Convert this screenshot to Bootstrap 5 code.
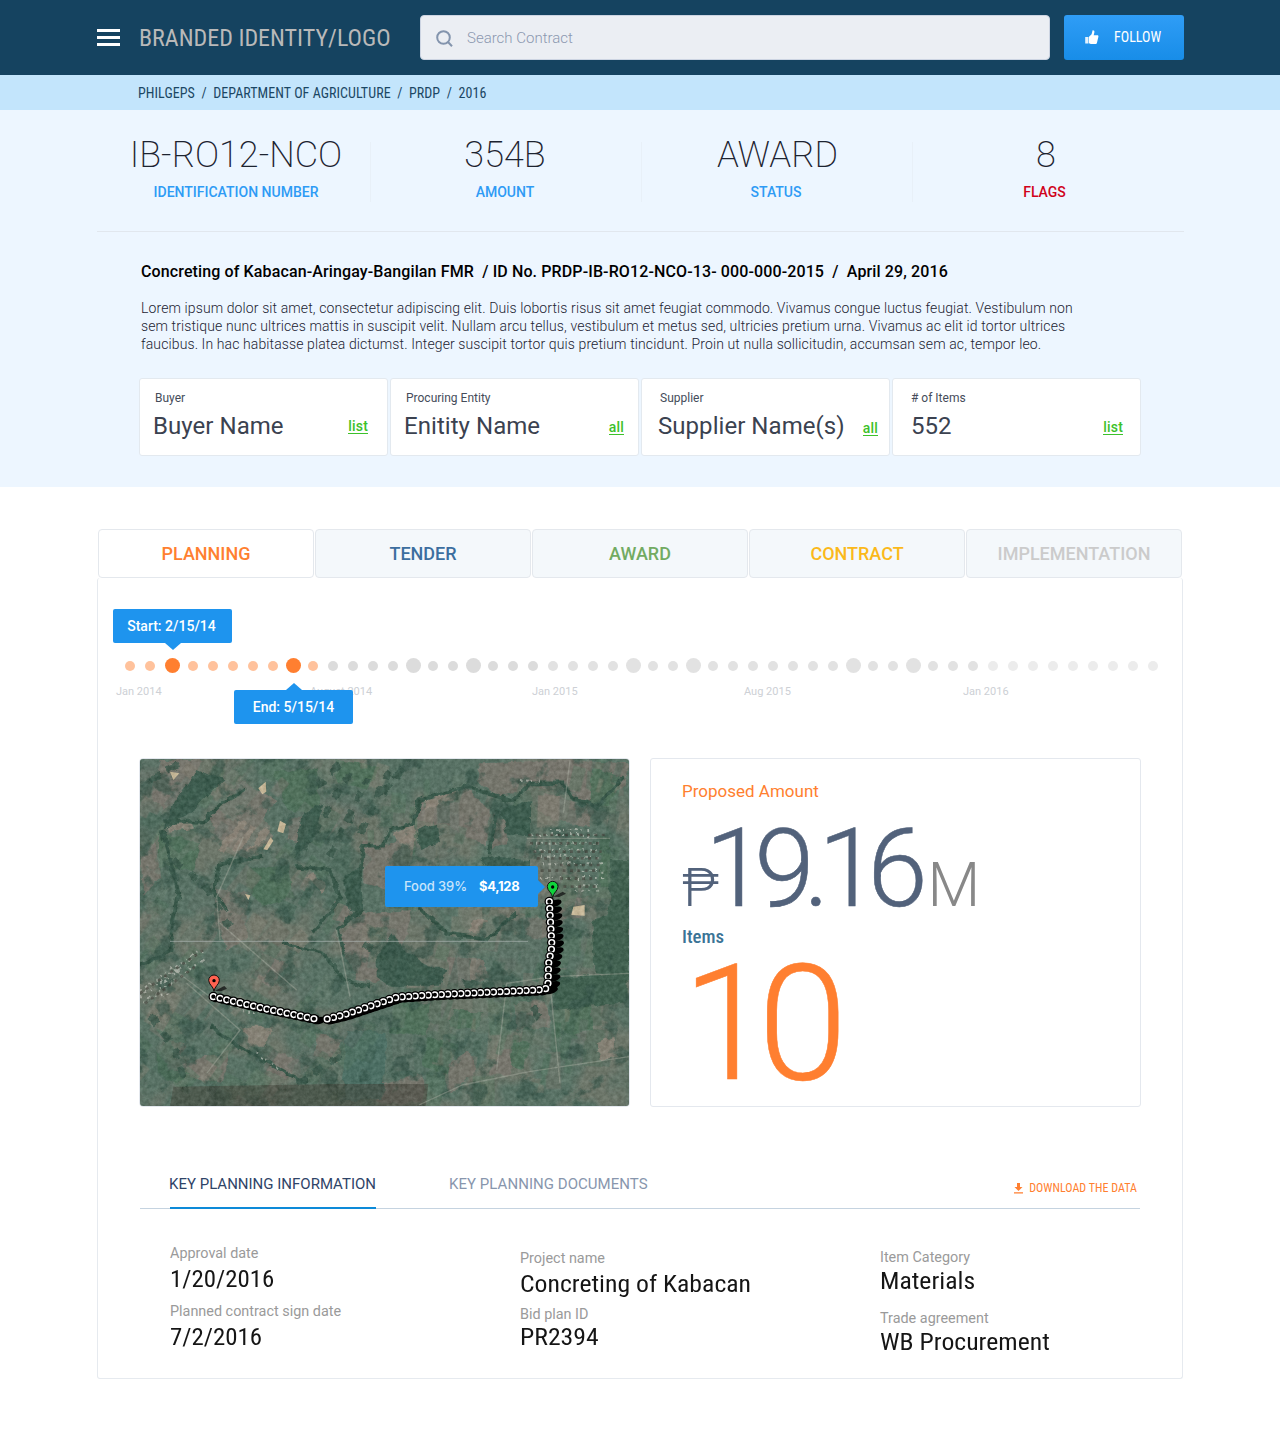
<!DOCTYPE html>
<html lang="en">
<head>
<meta charset="utf-8">
<meta name="viewport" content="width=device-width, initial-scale=1">
<title>Contract</title>
<link href="https://cdn.jsdelivr.net/npm/bootstrap@5.3.0/dist/css/bootstrap.min.css" rel="stylesheet">
<style>
body{font-family:Roboto,"Liberation Sans",sans-serif;background:#fff;color:#2f3644}
.shell{width:1086px;margin:0 auto}
.rc{font-stretch:75%}
.topbar{background:#154360;height:75px}
.topbar .shell>*{flex:none}
.burger{width:23px;height:17px}
.burger span{height:3px;background:#fff}
.brand{font-size:24px;line-height:30px;color:#b9b9b9;margin-left:19px;width:281px;white-space:nowrap;padding-top:1px}
.searchbox{width:630px;height:45px;background:#ebeef3;border:1px solid #ccd4e2;border-radius:4px;color:#8b98b0;font-size:15px;font-weight:300;padding:1px 0 0 15px;gap:14px}
.follow{width:120px;height:45px;border:0;border-radius:3px;background:linear-gradient(#2f9df6,#188de8);color:#fff;font-size:14px;padding:0 0 0 21px;margin-left:14px;gap:15px}
.crumbs{background:#c3e5fc;height:35px;color:#1b4764;font-size:14px;letter-spacing:.06px;white-space:pre}
.crumbs span{padding:2px 0 0 41px}
.hero{background:#edf6ff;height:377px}
.stats{height:122px;border-bottom:1px solid #e1e7ee;padding-top:22px;width:1087px}
.stat{width:271px;text-align:center}
.stat:first-child{width:273px;padding-left:5px}
.stat+.stat{border-left:1px solid #e8f0f8;height:60px;margin-top:10px;padding-right:2px}
.stat+.stat .big{margin-top:-10px}
.stat:nth-child(3) .big,.stat:last-child .big{padding-left:3px}
.stat:last-child{padding-right:7px}
.big{font-size:36px;line-height:46px;font-weight:200;color:#1c2330}
.lbl{font-size:14px;line-height:20px;font-weight:500;color:#2e9bf5;margin-top:4px}
.lbl.red{color:#d0021b}
.ttl{font-size:16px;line-height:20px;font-weight:500;color:#000;margin:0 0 0 44px;padding-top:30px;letter-spacing:.12px;white-space:pre}
.desc{font-size:14px;line-height:18px;color:#1c2332;font-weight:300;letter-spacing:.11px;margin:17px 0 0 44px;white-space:nowrap}
.tiles{margin:25px 0 0 42px;gap:2px}
.tile{width:249px;height:78px;background:#fff;border:1px solid #e3e9ef;border-radius:3px;padding:10px 19px 0 13px}
.tile .cap{font-size:12px;line-height:18px;padding-left:2px;color:#454c5a}
.tile .val{font-size:24px;line-height:38px;font-weight:400;color:#3b4250;letter-spacing:.05px}
.tile a{font-size:14px;line-height:14px;font-weight:500;color:#3cc12b;text-decoration:none;border-bottom:1px solid #3cc12b;letter-spacing:.2px}
.tile .dn1{margin-top:2px}
.tile .dn2{margin-top:4px}
.phases{padding:42px 1px 0;gap:1px}
.phases div{flex:1;height:49px;border:1px solid #e4e8ed;border-radius:4px;background:#f4f8fb;font-size:18px;font-weight:500;text-align:center;line-height:48px}
.phases .on{background:#fff}
.panel{height:801px;border:1px solid #e6eaef;border-top:0;border-radius:3px}
.timeline{height:180px;position:relative}
.dots{padding:77px 0 0 22px}
.dots i{width:20px;height:20px;display:flex;align-items:center;justify-content:center;flex:none}
.dots i:nth-child(2){margin-right:2px}
.dots i:nth-child(3){margin-right:1px}
.dots i::before{content:"";width:10px;height:10px;border-radius:50%;background:#e2e2e2;margin-top:1px}
.dots .o::before{background:#ffc29c}
.dots .g::before{background:#dcdcdc}
.dots .l::before{background:#ececec}
.dots .xl::before{width:15px;height:15px}
.dots .hot::before{background:#ff7f30}
.axis{font-size:11px;line-height:16px;color:#cdd0d5;margin-top:9px;padding-left:18px}
.axis span{flex:none}
.tip{position:absolute;background:#1e94ee;border-radius:2px;color:#fff;font-size:14px;font-weight:500;text-align:center;height:34px;line-height:34px;width:119px}
.tip::after{content:"";position:absolute;left:52px;border:8px solid transparent}
.tip.up{left:15px;top:31px;padding-right:2px}
.tip.dn{left:136px;top:112px}
.tip.up::after{bottom:-7px;border-bottom:0;border-top:7px solid #1e94ee}
.tip.dn::after{top:-7px;border-top:0;border-bottom:7px solid #1e94ee}
.mapbox{width:491px;height:349px;border:1px solid #e4e8ee;border-radius:4px;overflow:hidden;position:relative;flex:none}
.mapbox svg{display:block}
.maptip{position:absolute;left:245px;top:107px;width:153px;height:41px;border-radius:2px;background:#1e94ee;color:#fff;font:500 13px/41px Inter,sans-serif;padding-left:19px;white-space:nowrap}
.maptip .who{color:#c9e4fb;margin-right:12px;letter-spacing:-.08px}
.maptip .sum{font-weight:700;letter-spacing:-.32px}
.maptip::after{content:"";position:absolute;right:-7px;top:14px;border:7px solid transparent;border-right:0;border-left-color:#1e94ee}
.amt{width:491px;height:349px;border:1px solid #e4e8ee;border-radius:3px;margin-left:20px;padding:21px 0 0 31px}
.amt .cap{font-size:17px;line-height:22px;color:#ff7f30;font-weight:400}
.amt .money{font-weight:300;color:#52627b;height:110px;line-height:110px;margin-top:12px;white-space:nowrap}
.money .cur{font-size:54px;letter-spacing:-6px}
.money .num{font-size:109px;letter-spacing:-11.3px;margin-left:-8px;-webkit-text-stroke:.5px #52627b}
.money .mil{font-size:61px;color:#888;margin-left:11px}
.amt .itm{font-size:18.8px;line-height:22px;font-weight:500;color:#3a7396;margin-top:2px}
.amt .ten{font-size:162px;line-height:152px;font-weight:300;color:#ff7f30;letter-spacing:-14px;-webkit-text-stroke:.5px #ff7f30}
.subtabs{margin:57px 42px 0;height:45px;border-bottom:1px solid #c5d3e0;padding-left:30px}
.subtabs .st{font-size:15px;line-height:20px;color:#8896ad;height:45px;padding-top:10px;white-space:nowrap}
.subtabs .on{color:#2f4468;width:206px;border-bottom:2px solid #0d8ad8}
.subtabs .on span{margin-left:-1px}
.subtabs .off{margin-left:73px;letter-spacing:.04px}
.dl{font-size:12px;color:#ff7f30;line-height:14px;gap:6px;margin-right:3px;padding-top:17px;letter-spacing:.03px}
.info{padding-left:72px}
.info dl{margin:0}
.info dt{font-size:14.4px;line-height:20px;font-weight:400;color:#9a9a9a}
.info dd{font-size:24.5px;line-height:30px;font-stretch:75%;color:#151515;margin:0;white-space:nowrap;transform:scaleX(1.05);transform-origin:0 0}
.c1{width:350px;padding-top:35px}.c2{width:360px;padding-top:40px}.c3{padding-top:39px}
.info .c1 dd{height:38px;transform:scaleX(1.015)}.c2 dd{height:36px}.c3 dd{height:43px}
.info .c3 dd{margin-top:-2px}
.info .c2 dd:last-child{margin-top:-3px}
</style>
</head>
<body>
<header class="topbar">
  <div class="shell d-flex align-items-center h-100">
    <div class="burger d-flex flex-column justify-content-between"><span></span><span></span><span></span></div>
    <div class="brand rc">BRANDED IDENTITY/LOGO</div>
    <div class="searchbox d-flex align-items-center">
      <svg width="17" height="17" viewBox="0 0 17 17" fill="none" stroke="#8394ad" stroke-width="2"><circle cx="7.5" cy="7.5" r="6.3"/><path d="M12 12l4 4.2"/></svg>
      <span>Search Contract</span>
    </div>
    <button class="btn follow rc d-flex align-items-center" type="button">
      <svg width="14" height="15" viewBox="0 0 14 15" fill="#fff"><path d="M.2 7h3.300v6.500H.2z" opacity=".88"/><path d="M4 13.300V6.800L6.600 4.300 7.600.3c1.400-.2 2 .8 1.800 2L8.700 5.200H12.300c1 0 1.300.7 1.100 1.500l-1.500 6.200c-.2.800-.7 1.100-1.400 1.100H5.800z"/></svg>
      <span>FOLLOW</span>
    </button>
  </div>
</header>
<nav class="crumbs"><div class="shell d-flex align-items-center h-100"><span class="rc">PHILGEPS  /  DEPARTMENT OF AGRICULTURE  /  PRDP  /  2016</span></div></nav>
<section class="hero">
  <div class="shell">
    <div class="stats d-flex">
      <div class="stat"><div class="big">IB-RO12-NCO</div><div class="lbl">IDENTIFICATION NUMBER</div></div>
      <div class="stat"><div class="big">354B</div><div class="lbl">AMOUNT</div></div>
      <div class="stat"><div class="big">AWARD</div><div class="lbl">STATUS</div></div>
      <div class="stat"><div class="big">8</div><div class="lbl red">FLAGS</div></div>
    </div>
    <h1 class="ttl">Concreting of Kabacan-Aringay-Bangilan FMR  / ID No. PRDP-IB-RO12-NCO-13- 000-000-2015  /  April 29, 2016</h1>
    <p class="desc">Lorem ipsum dolor sit amet, consectetur adipiscing elit. Duis lobortis risus sit amet feugiat commodo. Vivamus congue luctus feugiat. Vestibulum non<br>sem tristique nunc ultrices mattis in suscipit velit. Nullam arcu tellus, vestibulum et metus sed, ultricies pretium urna. Vivamus ac elit id tortor ultrices<br>faucibus. In hac habitasse platea dictumst. Integer suscipit tortor quis pretium tincidunt. Proin ut nulla sollicitudin, accumsan sem ac, tempor leo.</p>
    <div class="tiles d-flex">
      <div class="tile"><div class="cap">Buyer</div><div class="d-flex justify-content-between align-items-center"><span class="val">Buyer Name</span><a href="#">list</a></div></div>
      <div class="tile" style="padding-right:14px"><div class="cap">Procuring Entity</div><div class="d-flex justify-content-between align-items-center"><span class="val">Enitity Name</span><a href="#" class="dn1">all</a></div></div>
      <div class="tile" style="padding-right:11px;padding-left:16px"><div class="cap">Supplier</div><div class="d-flex justify-content-between align-items-center"><span class="val">Supplier Name(s)</span><a href="#" class="dn2">all</a></div></div>
      <div class="tile" style="padding-right:17px;padding-left:18px"><div class="cap" style="padding-left:0">&#35; of Items</div><div class="d-flex justify-content-between align-items-center"><span class="val">552</span><a href="#" class="dn1">list</a></div></div>
    </div>
  </div>
</section>
<main class="shell">
  <div class="phases d-flex">
    <div class="on" style="color:#ff7f30">PLANNING</div>
    <div style="color:#3c6e9f">TENDER</div>
    <div style="color:#72ab62">AWARD</div>
    <div style="color:#fbb91a">CONTRACT</div>
    <div style="color:#cbcbcb">IMPLEMENTATION</div>
  </div>
  <div class="panel">
    <div class="timeline">
      <div class="dots d-flex" id="dots"></div>
      <div class="axis d-flex"><span style="width:194px">Jan 2014</span><span style="width:222px">August 2014</span><span style="width:212px">Jan 2015</span><span style="width:219px">Aug 2015</span><span>Jan 2016</span></div>
      <div class="tip up">Start: 2/15/14</div>
      <div class="tip dn">End: 5/15/14</div>
    </div>
    <div class="d-flex" style="padding-left:41px">
      <div class="mapbox">
        <svg width="489" height="347" viewBox="30 27 1467 1041" preserveAspectRatio="none" color-interpolation-filters="sRGB">
          <defs>
            <filter id="rough" x="-5%" y="-5%" width="110%" height="110%"><feTurbulence type="fractalNoise" baseFrequency=".03" numOctaves="3" seed="4"/><feDisplacementMap in="SourceGraphic" scale="22" xChannelSelector="R" yChannelSelector="G"/></filter>
            <filter id="veg" x="0" y="0" width="100%" height="100%"><feTurbulence type="fractalNoise" baseFrequency=".014" numOctaves="5" seed="11"/><feColorMatrix values="0 0 0 0 .17  0 0 0 0 .3  0 0 0 0 .25  9 0 0 0 -5.2"/></filter>
            <filter id="soil" x="0" y="0" width="100%" height="100%"><feTurbulence type="fractalNoise" baseFrequency=".006" numOctaves="3" seed="23"/><feColorMatrix values="0 0 0 0 .47  0 0 0 0 .46  0 0 0 0 .41  0 5 0 0 -2.200"/></filter>
            <filter id="grain" x="0" y="0" width="100%" height="100%"><feTurbulence type="fractalNoise" baseFrequency=".08" numOctaves="3" seed="8"/><feColorMatrix values="1.300 0 0 0 -.1  1.300 0 0 0 -.08  1.300 0 0 0 -.1  0 0 0 0 .13"/></filter>
          </defs>
          <rect x="30" y="27" width="1467" height="1041" fill="#526e60"/>
          <rect x="30" y="27" width="1467" height="1041" filter="url(#soil)" opacity=".6"/>
          <g filter="url(#rough)">
            <g fill="#76736a" opacity=".9">
              <path d="M90 30h130l-50 90-70 60-40-50zM240 200l90-110 110 60-40 60 30 50-80 70-90-70zM860 160l140-50 80 70-10 110-110-60-110-30zM1050 40l250-10-10 70-190 40-60-50zM1200 110l190 70-10 50-70-10-100-40zM1090 190l50 40-10 60h-50zM1280 30l217 10-17 70-100 60-80-50zM30 300l50-20 10 100-50 60zM480 200l70 10-30 70-50-10zM930 960l90-60 20 60-80 70z"/>
              <path d="M700 270l70 20 90-60-10 100-70 90-80-20zM700 490l150-10-50 160-60 60-60-10-50-130zM610 450l60 20-20 50-40-10zM1310 450l70-10-30 60-70 10zM120 870l50 20-30 40zM160 940l140-40-20 100-100-20zM1150 760l100-10 10 80-100 10zM260 420l90 10v130l-60 40-40-110zM400 610l80 30-60 70-50-30zM1110 900l60-10-30 90-60-10z"/>
              <path d="M560 850l80 20-20 70-70-20zM760 1000l120-30 10 90H740zM1180 500l110 10-30 60-70-10zM950 620l110 10 20 60-120 10zM430 900l80 30-50 60-60-40z"/>
            </g>
            <g fill="#456b52" opacity=".85"><path d="M350 360l130-20 10 100-90 30-50-50zM430 60h130l10 140-100-20zM790 760h110l-10 90H780zM1270 780l110-10 10 70-110 20zM970 780l90 10-20 50-80-10zM90 250l120 30-20 80-100-10zM1390 50l80 30-30 90-60-10zM890 860l90 20-30 90-70-20zM1150 870l50 10-20 80-40-10zM80 900l40 60 60 10-40 30-60-30zM1410 260h30v150h-30zM620 30l130 20-40 70-90-20z"/></g>
            <path fill="#446a5f" d="M650 840l120 10-10 200H640z"/>
          </g>
          <g id="plots" opacity=".42"></g>
          <g filter="url(#rough)">
            <g fill="#8c8376" opacity=".85"><path d="M1030 510h40l-20 35h-40zM330 830h100l-30 60h-30zM790 250l60-30 10 50-50 20zM530 380l20-10 40 40-10 20zM330 210l20 8-70 95-16-12zM360 225l22 8-60 80-18-10zM400 235l20 10-50 70-16-12zM890 140l90-20-10 30-90 30zM1400 880l50-20 10 60-50 10zM110 222l70-6 10 20-80 12z"/></g>
            <g fill="#2f5244" opacity=".9"><path d="M740 620l50-70 30 50 80 50 50 0-20 60H780l-40-30zM1110 180l90-30v110l-70-10zM1050 320l150 10v50l-120-20zM200 60l80 30-90 90-90 60 30-80zM860 240l60-20 10 60-60 20zM520 190l60-30-30 110-60 50zM640 380l50-30 10 130-40 10z"/></g>
            <path fill="#375a48" d="M1440 330h57v350l-100-10-10-150 50-30zM1270 680l220-10v90l-220 20z"/>
            <path fill="none" stroke="#2e5041" stroke-width="11" d="M1200 100l-50 50-150-40-130 40-20 70-70 20-20 50h-60l-10 90-40 50 40 50-70 60 30 80M95 240l50 180-20 100 0 80-100 50M100 215h120l60-60 70-40M400 320l-130 20-20 80 40 60M500 350l100 10 30 80-80 110M1200 100h100l30 50 70 20 80-90M870 470l80 80 120 20 90-80M460 580l120 30 60 80 80 20M1100 180l-20 130M240 830l120 80 170 90"/>
            <g fill="none" stroke="#2d4e40" stroke-width="20" stroke-dasharray="34 26" opacity=".8"><path d="M560 110l90-80M520 300l140-230M600 320l110-230M690 250l90-190M760 130l80-100M130 330l90 70 80 130M60 90l90-50M60 800l80 100 30 130M700 580l90 50M500 1000l140-90M1000 700l180 20 50 90"/></g>
          </g>
          <rect x="30" y="27" width="1467" height="1041" filter="url(#veg)" opacity=".6"/>
          <path fill="#3a3d31" opacity=".55" d="M130 1010l480-8 285 0-8 66H120z"/>
          <g fill="none" stroke="#a9aca0" stroke-width="4" opacity=".45"><path d="M230 970l100-130-160-140M270 570l-10-130 80-180M270 520l230 200M1497 920l-300 45-200 40-130 60M1100 960l30-260 140-20 230-10M1320 30l-20 160M1260 270v130M1190 265h250M1290 1000l-30-300M120 650l120 90M620 540l40 200"/></g>
          <g fill="#cdbb98"><path d="M450 212l18 10-8 28-18-6zM385 115l22-20 2 30-12 8zM400 298l22-36 8 10-18 28zM120 65l28 5-18 20zM1330 470l34-5v32l-40-2zM345 432l16 4-6 14z"/></g>
          <g fill="none" stroke="#d5d5cc" stroke-width="6" stroke-dasharray="5 13 8 9 4 17" opacity=".6" filter="url(#rough)"><path d="M1205 255h200M1200 278h220M1210 300h190M1230 320h180M1240 340h180M1340 362h80M1230 384h190M1340 406h70M1260 240h130M1340 422h60M30 740l190-135M30 722l180-120M60 745l160-115M90 715l60-65M40 755l80-30M300 770l90 20M380 910l70 50M1170 90l60 5"/></g>
          <g fill="none" stroke="#3c3a33" stroke-width="8" stroke-dasharray="9 13" opacity=".65"><path d="M1195 255h240M1200 280h220M1210 305h205M1220 325h190M1290 345h120M1210 362h200M1290 386h110M1300 410h100M30 730l190-130M45 760l150-110"/></g>
          <rect x="30" y="27" width="1467" height="1041" filter="url(#grain)"/>
          <path stroke="#b5bdbc" stroke-width="3" opacity=".6" d="M120 574h1074"/>
          <g id="route"></g>
          <path fill="#111" opacity=".75" d="M255 722l28-14 8 8-18 8zM1270 440l28-15 10 6-20 10z"/>
          <g stroke="#111" stroke-width="3"><path fill="#ff6250" d="M252 724c-2-16-16-20-16-33a16 16 0 0132 0c0 13-14 17-16 33z"/><path fill="#0fd43c" d="M1268 443c-2-16-16-20-16-33a16 16 0 0132 0c0 13-14 17-16 33z"/></g>
          <circle cx="252" cy="692" r="5"/><circle cx="1268" cy="411" r="5"/>
        </svg>
        <div class="maptip"><span class="who">Food 39%</span><span class="sum">$4,128</span></div>
      </div>
      <div class="amt">
        <div class="cap">Proposed Amount</div>
        <div class="money"><span class="cur">₱</span><span class="num">19.16</span><span class="mil">M</span></div>
        <div class="itm rc">Items</div>
        <div class="ten">10</div>
      </div>
    </div>
    <div class="subtabs d-flex">
      <div class="st on"><span>KEY PLANNING INFORMATION</span></div>
      <div class="st off">KEY PLANNING DOCUMENTS</div>
      <div class="dl rc ms-auto d-flex"><svg width="9" height="11" viewBox="0 0 9 11" fill="#ff7f30" style="margin-top:2px"><path d="M3 0h3v4h2.500L4.500 8 .5 4H3zM0 9.200h9v1.300H0z"/></svg><span>DOWNLOAD THE DATA</span></div>
    </div>
    <div class="info d-flex">
      <dl class="c1"><dt>Approval date</dt><dd>1/20/2016</dd><dt>Planned contract sign date</dt><dd>7/2/2016</dd></dl>
      <dl class="c2"><dt>Project name</dt><dd>Concreting of Kabacan</dd><dt>Bid plan ID</dt><dd>PR2394</dd></dl>
      <dl class="c3"><dt>Item Category</dt><dd>Materials</dd><dt>Trade agreement</dt><dd>WB Procurement</dd></dl>
    </div>
  </div>
</main>
<script src="https://cdn.jsdelivr.net/npm/bootstrap@5.3.0/dist/js/bootstrap.bundle.min.js"></script>
<script>
// month markers: large ones are milestones, the tint shows the phase
var large = [2, 8, 14, 17, 25, 28, 36, 39], dots = '';
for (var i = 0; i < 52; i++) {
  var c = i < 10 ? 'o' : i < 21 ? 'g' : i > 42 ? 'l' : '';
  if (large.indexOf(i) >= 0) c += ' xl';
  if (i === 2 || i === 8) c += ' hot';
  dots += '<i class="' + c + '"></i>';
}
document.getElementById('dots').innerHTML = dots;

// farmland parcels: a repeatable scatter of slanted strips
var seed = 7;
function rnd() { seed = (seed * 16807) % 2147483647; return seed / 2147483647; }
var tones = ['#77736a', '#647a6b', '#466a55', '#858073', '#50745c', '#5d6f64', '#3a5c4d'], plots = '';
for (i = 0; i < 300; i++) {
  var px = 30 + rnd() * 1440, py = 30 + rnd() * 1020, w = 16 + rnd() * 50, h = 40 + rnd() * 80;
  var turn = px < 700 ? 25 + rnd() * 20 : -4 + rnd() * 24;
  plots += '<rect x="' + (px - w / 2).toFixed(0) + '" y="' + (py - h / 2).toFixed(0) + '" width="' + w.toFixed(0) + '" height="' + h.toFixed(0) +
    '" fill="' + tones[Math.floor(rnd() * tones.length)] + '" transform="rotate(' + turn.toFixed(0) + ' ' + px.toFixed(0) + ' ' + py.toFixed(0) + ')"/>';
}
document.getElementById('plots').innerHTML = plots;

// road markers, each leg stacked from its first point to its last
function leg(points, step) {
  var out = [], carry = 0;
  for (var k = 1; k < points.length; k++) {
    var a = points[k - 1], b = points[k], dx = b[0] - a[0], dy = b[1] - a[1], len = Math.hypot(dx, dy);
    for (var d = carry; d < len; d += step) out.push([a[0] + dx * d / len, a[1] + dy * d / len]);
    carry = d - len;
  }
  return out;
}
var marks = [].concat(
  leg([[1258, 455], [1266, 590], [1256, 640], [1254, 700]], 20.5),
  leg([[1247, 716], [1225, 720], [900, 735], [800, 742], [640, 795], [575, 811]], 19.6),
  leg([[250, 740], [400, 775], [560, 808]], 20.6));
var shade = '', rings = '';
marks.forEach(function (p) {
  var x = p[0].toFixed(1), y = p[1].toFixed(1);
  shade += '<ellipse cx="' + (p[0] + 14).toFixed(1) + '" cy="' + (p[1] + 10).toFixed(1) + '" rx="21" ry="10" transform="rotate(-18 ' + x + ' ' + y + ')"/>';
  rings += '<circle cx="' + x + '" cy="' + y + '" r="14.500"/><circle cx="' + x + '" cy="' + y + '" r="8.500" stroke="#fff" stroke-width="4.500"/>';
});
document.getElementById('route').innerHTML = shade + rings;
</script>
</body>
</html>
